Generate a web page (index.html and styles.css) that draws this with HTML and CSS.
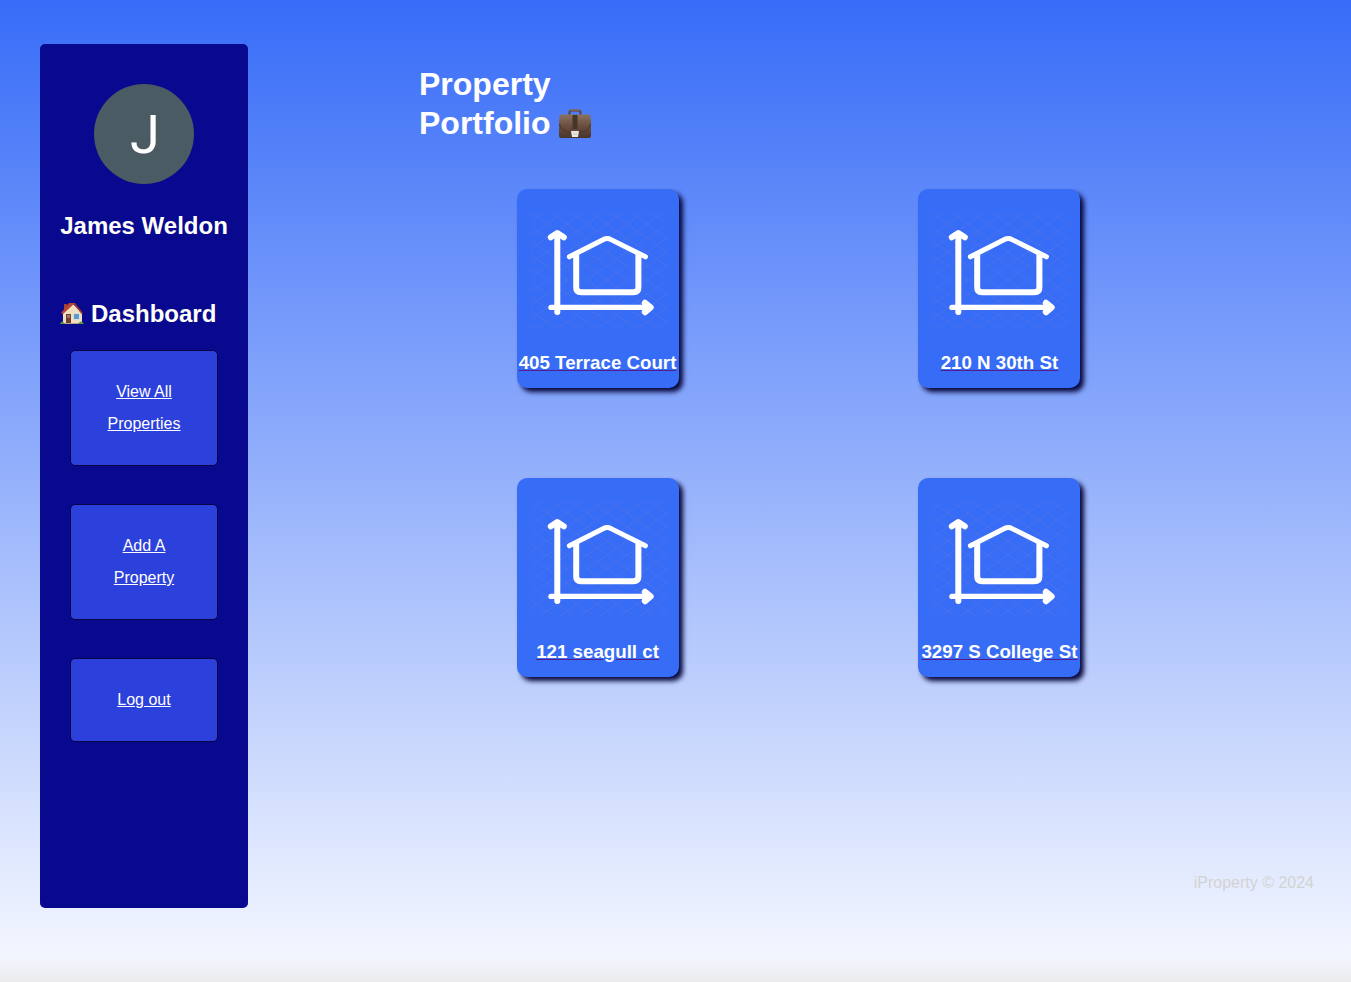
FILE: index.html
```html
<!DOCTYPE html>
<html lang="en">
<head>
<meta charset="utf-8">
<meta name="viewport" content="width=device-width, initial-scale=1">
<title>iProperty</title>
<link rel="stylesheet" href="styles.css">
</head>
<body>
<svg class="defs" aria-hidden="true">
  <defs>
    <pattern id="mesh" width="20" height="14" patternUnits="userSpaceOnUse">
      <path d="M0 0l20 14M20 0L0 14" fill="none" stroke="#8f80c8" stroke-opacity=".18" stroke-width="1"/>
    </pattern>
    <symbol id="plan" viewBox="0 0 162 150">
      <rect x="14" y="23" width="136" height="116" fill="url(#mesh)"/>
      <g fill="none" stroke="#fff" stroke-width="6" stroke-linecap="round" stroke-linejoin="round">
        <path d="M40.300 45V123"/>
        <path d="M33.800 48.300l6.500-4.300 6.500 4.300" stroke-width="6"/>
        <path d="M34 118.400h98" stroke-width="5.400"/>
        <path d="M128 114l5.500 4.400-5.500 4.600" stroke-width="6.400"/>
        <path d="M52.400 67.800 86.500 50.600Q90.300 48.600 94.100 50.600L128.400 67.800" stroke-width="5"/>
        <path d="M59.200 66V98.500Q59.200 103.200 64 103.200H116.500Q121.400 103.200 121.400 98.500V66"/>
      </g>
    </symbol>
  </defs>
</svg>
<div class="page">
  <aside class="sidebar">
    <div class="avatar">J</div>
    <h2 class="name">James Weldon</h2>
    <h2 class="heading">
      <svg class="house" viewBox="0 1 24 24" aria-hidden="true">
        <path d="M4 3h3v6H4z" fill="#a5402f"/>
        <path d="M3 12 13 3l9 9v11H3z" fill="#efdfc0"/>
        <path d="M13 2h2l8 10-1.500 1z" fill="#9f3429"/>
        <path d="M1 12 9 2h6L3 13z" fill="#b94535"/>
        <path d="M6 13h5v9H6z" fill="#71402e"/>
        <path d="M7 14h3v3H7z" fill="#9d7668"/>
        <path d="M13 12h7v7h-7z" fill="#d9dfdf"/>
        <path d="M14 13h5v5h-5z" fill="#5b9ccd"/>
        <path d="M2 22h20v1H2z" fill="#b2a48c"/>
        <path d="M0 23q2-5 5 0zM18 23q3-5 6 0z" fill="#579a3a"/>
      </svg>
      Dashboard
    </h2>
    <nav class="menu">
      <a class="item" href="#all">View All Properties</a>
      <a class="item" href="#add">Add A Property</a>
      <a class="item" href="#logout">Log out</a>
    </nav>
  </aside>
  <main class="main">
    <h1 class="title">Property Portfolio
      <svg class="case" viewBox="1 0 34 30" aria-hidden="true">
        <defs><linearGradient id="leather" x1="0" y1="0" x2="0" y2="1"><stop offset="0" stop-color="#8b7260"/><stop offset=".5" stop-color="#6a4d3e"/><stop offset="1" stop-color="#49342c"/></linearGradient></defs>
        <path d="M11.500 6V3.500q0-2 2-2h7q2 0 2 2V6" fill="none" stroke="#5b4238" stroke-width="2"/>
        <path d="M12 2q0-1 2-1h6q2 0 2 1" fill="none" stroke="#a07b50" stroke-width="1"/>
        <path d="M3 5.500h28q1 0 1.300 1L33 12v15q0 2-2 2H3q-2 0-2-2V12l.7-5.500q.3-1 1.300-1z" fill="url(#leather)"/>
        <path d="M1.500 15q1 7 10 8h11q9-1 10-8" fill="none" stroke="#4a342b" stroke-width="1"/>
        <path d="M14.500 6h5v14h-5z" fill="#493429"/>
        <path d="M13 22h8l-1 6h-6z" fill="#e8e6e1"/>
        <path d="M15 24h4v2h-4z" fill="#d9d6d0"/>
      </svg>
    </h1>
    <div class="grid">
      <a class="card" href="#p1"><svg class="plan" aria-hidden="true"><use href="#plan"/></svg><h3 class="address">405 Terrace Court</h3></a>
      <a class="card" href="#p2"><svg class="plan" aria-hidden="true"><use href="#plan"/></svg><h3 class="address">210 N 30th St</h3></a>
      <a class="card" href="#p3"><svg class="plan" aria-hidden="true"><use href="#plan"/></svg><h3 class="address">121 seagull ct</h3></a>
      <a class="card" href="#p4"><svg class="plan" aria-hidden="true"><use href="#plan"/></svg><h3 class="address">3297 S College St</h3></a>
    </div>
    <footer class="footer">iProperty © 2024</footer>
  </main>
</div>
</body>
</html>
```
FILE: styles.css
```css
* { box-sizing: border-box; }
body {
  margin: 0;
  min-height: 100vh;
  font-family: "Liberation Sans", Arial, sans-serif;
  font-size: 16px;
  color: #fff;
  background:
    linear-gradient(to top, #ebebee, rgba(243, 244, 248, 0) 28px),
    linear-gradient(#376cf8, #f8faff);
}
.defs { position: absolute; width: 0; height: 0; }
h1, h2, h3 { margin: 0; }
.page {
  display: flex;
  min-height: 100vh;
  padding: 44px 2px 74px 40px;
}
.sidebar {
  flex: none;
  width: 208px;
  min-height: 864px;
  padding: 40px 20px;
  border-radius: 5px;
  background: #090990;
}
.avatar {
  display: flex;
  align-items: center;
  justify-content: center;
  width: 100px;
  height: 100px;
  margin: 0 auto;
  padding-left: 2px;
  border-radius: 50%;
  background: #4b5b63;
  font-family: Roboto, sans-serif;
  font-size: 54px;
}
.name, .heading {
  font-size: 24px;
  line-height: 28px;
  white-space: nowrap;
  color: #fffff8;
}
.name { margin-top: 28px; text-align: center; }
.heading { display: flex; gap: 7px; align-items: center; margin-top: 60px; }
.house { width: 24px; height: 24px; }
.menu {
  display: flex;
  flex-direction: column;
  gap: 38px;
  margin: 22px 10px 0;
}
.item {
  padding: 25px;
  border: 1px solid #05053f;
  border-radius: 5px;
  background: #2c40dc;
  color: #fff;
  line-height: 32px;
  text-align: center;
}
.main {
  flex: 1;
  display: flex;
  flex-direction: column;
}
.title {
  width: 190px;
  margin: 21px 0 0 171px;
  font-size: 32px;
  line-height: 39px;
}
.case { width: 34px; height: 30px; vertical-align: -5px; }
.grid {
  display: grid;
  grid-template-columns: 1fr 1fr;
  gap: 90px 0;
  width: 73%;
  margin: 46px auto 0;
  justify-items: center;
}
.card {
  width: 162px;
  padding-bottom: 14px;
  border-radius: 10px;
  background: #376cf6;
  box-shadow: 4px 4px 5px #08083c;
  color: #551a8b;
  text-align: center;
  text-decoration: underline;
}
.plan { display: block; width: 100%; height: 150px; }
.address {
  margin-top: 13px;
  color: #fff;
  line-height: 22px;
  white-space: nowrap;
}
.footer {
  margin: auto 35px 16px auto;
  color: #d3d3d3;
  line-height: 18px;
}
```
